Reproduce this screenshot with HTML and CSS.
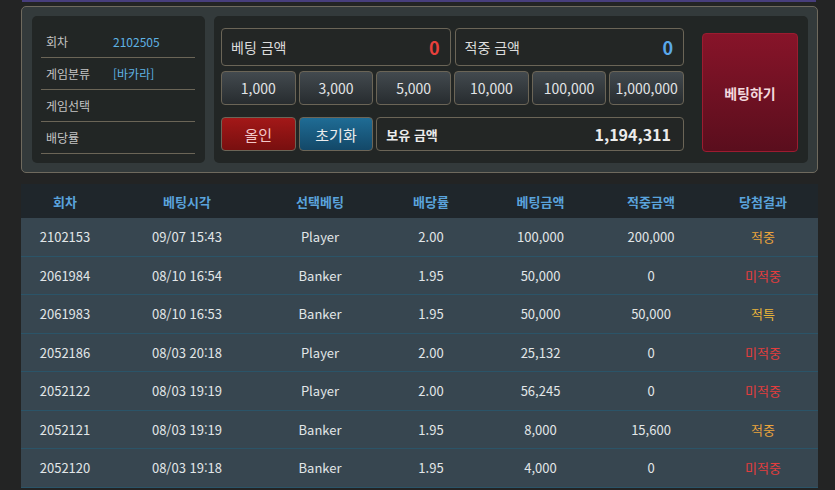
FILE: index.html
```html
<!DOCTYPE html>
<html lang="ko">
<head>
<meta charset="utf-8">
<title>베팅</title>
<link rel="stylesheet" href="styles.css">
</head>
<body>
<div class="wrap">
  <div class="topline"></div>
  <div class="panel">
    <div class="info">
      <div class="info-row"><span class="lbl">회차</span><span class="val">2102505</span></div>
      <div class="info-row"><span class="lbl">게임분류</span><span class="val">[바카라]</span></div>
      <div class="info-row"><span class="lbl">게임선택</span><span class="val"></span></div>
      <div class="info-row"><span class="lbl">배당률</span><span class="val"></span></div>
    </div>
    <div class="bet">
      <div class="bet-main">
        <div class="amounts">
          <div class="amount"><span>베팅 금액</span><b class="red">0</b></div>
          <div class="amount"><span>적중 금액</span><b class="blue">0</b></div>
        </div>
        <div class="chips">
          <button class="chip">1,000</button>
          <button class="chip">3,000</button>
          <button class="chip">5,000</button>
          <button class="chip">10,000</button>
          <button class="chip">100,000</button>
          <button class="chip">1,000,000</button>
        </div>
        <div class="actions">
          <button class="act allin">올인</button>
          <button class="act reset">초기화</button>
          <div class="balance"><span>보유 금액</span><b>1,194,311</b></div>
        </div>
      </div>
      <button class="submit">베팅하기</button>
    </div>
  </div>

  <div class="table">
    <div class="tr th">
      <div>회차</div><div>베팅시각</div><div>선택베팅</div><div>배당률</div><div>베팅금액</div><div>적중금액</div><div>당첨결과</div>
    </div>
    <div class="tr">
      <div>2102153</div><div>09/07 15:43</div><div>Player</div><div>2.00</div><div>100,000</div><div>200,000</div><div class="win">적중</div>
    </div>
    <div class="tr">
      <div>2061984</div><div>08/10 16:54</div><div>Banker</div><div>1.95</div><div>50,000</div><div>0</div><div class="lose">미적중</div>
    </div>
    <div class="tr">
      <div>2061983</div><div>08/10 16:53</div><div>Banker</div><div>1.95</div><div>50,000</div><div>50,000</div><div class="special">적특</div>
    </div>
    <div class="tr">
      <div>2052186</div><div>08/03 20:18</div><div>Player</div><div>2.00</div><div>25,132</div><div>0</div><div class="lose">미적중</div>
    </div>
    <div class="tr">
      <div>2052122</div><div>08/03 19:19</div><div>Player</div><div>2.00</div><div>56,245</div><div>0</div><div class="lose">미적중</div>
    </div>
    <div class="tr">
      <div>2052121</div><div>08/03 19:19</div><div>Banker</div><div>1.95</div><div>8,000</div><div>15,600</div><div class="win">적중</div>
    </div>
    <div class="tr">
      <div>2052120</div><div>08/03 19:18</div><div>Banker</div><div>1.95</div><div>4,000</div><div>0</div><div class="lose">미적중</div>
    </div>
  </div>
</div>
</body>
</html>
```

FILE: styles.css
```css
* { box-sizing: border-box; }
html, body {
  margin: 0;
  padding: 0;
  background: #232424;
  height: 490px;
  overflow: hidden;
}
body {
  font-family: "Noto Sans CJK KR", "Noto Sans", sans-serif;
  color: #e2e6e8;
}
.wrap {
  width: 797px;
  margin-left: 21px;
}
.topline {
  height: 2px;
  background: #473e7c;
  margin: 0 2px 0 1px;
}
.panel {
  margin-top: 4px;
  height: 167px;
  border: 1px solid #6f6a5e;
  border-radius: 5px;
  background: #333a3b;
  padding: 9px 9px 9px 10px;
  display: flex;
  gap: 9px;
}
.info {
  width: 173px;
  background: #222625;
  border-radius: 5px;
  padding: 10px 10px 9px 9px;
}
.info-row {
  height: 32px;
  border-bottom: 1px solid #6b6557;
  display: flex;
  align-items: center;
  padding-left: 5px;
  font-size: 12px;
}
.lbl {
  width: 67px;
  color: #c4c4c4;
}
.val {
  color: #5fb2e4;
}
.bet {
  flex: 1;
  background: #222625;
  border-radius: 5px;
  padding: 12px 10px 0 7px;
  display: flex;
  gap: 18px;
}
.bet-main {
  width: 463px;
  display: flex;
  flex-direction: column;
}
.amounts {
  display: flex;
  gap: 4px;
  height: 38px;
}
.amount {
  flex: 1;
  border: 1px solid #6b6557;
  border-radius: 4px;
  background: #232625;
  display: flex;
  align-items: center;
  justify-content: space-between;
  padding: 0 10px 0 9px;
  font-size: 14px;
  color: #dcdcdc;
}
.amount b {
  font-size: 18px;
  font-weight: 700;
}
.red { color: #e8403c; }
.blue { color: #5aa8ea; }
.chips, .actions {
  display: grid;
  grid-template-columns: repeat(6, 1fr);
  gap: 3px;
  height: 34px;
}
.chips { margin-top: 5px; }
.actions { margin-top: 12px; }
button {
  font-family: inherit;
  margin: 0;
  cursor: pointer;
}
.chip {
  border: 1px solid #6b6557;
  border-radius: 4px;
  background: linear-gradient(#434a4f, #272c2f);
  color: #e2e4e6;
  font-size: 14px;
  padding: 0;
}
.act {
  border: 1px solid #6b6557;
  border-radius: 4px;
  font-size: 15px;
  padding: 0;
}
.allin {
  background: linear-gradient(#a31818, #780f0f);
  color: #f2c8c8;
}
.reset {
  background: linear-gradient(#1f6c95, #134868);
  color: #ececec;
}
.balance {
  grid-column: span 4;
  border: 1px solid #6b6557;
  border-radius: 4px;
  background: #232625;
  display: flex;
  align-items: center;
  justify-content: space-between;
  padding: 0 12px 0 9px;
  color: #ececec;
}
.balance span {
  font-size: 13px;
  font-weight: 700;
}
.balance b {
  font-size: 16px;
  font-weight: 700;
}
.submit {
  width: 96px;
  height: 119px;
  margin-top: 5px;
  border: 1px solid #9c1c30;
  border-radius: 4px;
  background: linear-gradient(#871429, #5a0e1d);
  color: #f3d9dd;
  font-size: 14px;
  font-weight: 700;
  padding: 0;
}
.table {
  margin-top: 11px;
  background: #374650;
}
.tr {
  display: grid;
  grid-template-columns: 88px 156px 110px 112px 107px 114px 110px;
  height: 38.5px;
  border-bottom: 1px solid #2b5468;
  align-items: center;
  text-align: center;
  font-size: 13px;
  color: #e2e6e8;
}
.tr.th {
  height: 34px;
  background: #1f262b;
  border-bottom: none;
  color: #5aa3dc;
  font-weight: 700;
}
.win { color: #eba43c; }
.lose { color: #e33d3d; }
.special { color: #e9b53a; }
```
